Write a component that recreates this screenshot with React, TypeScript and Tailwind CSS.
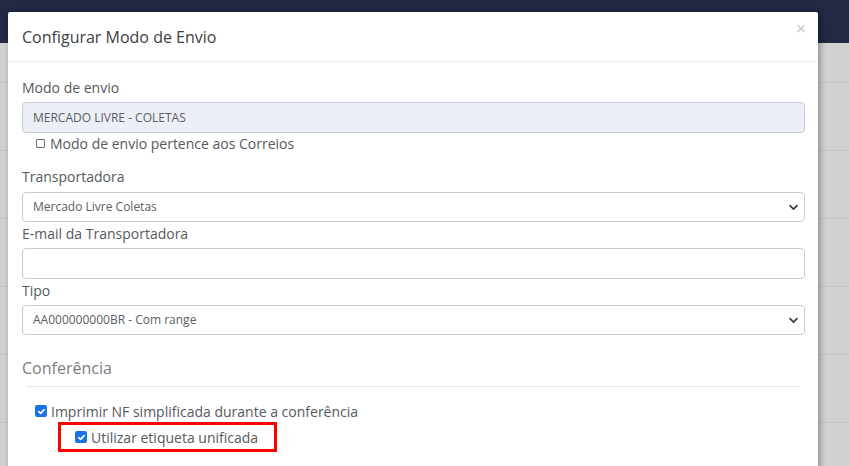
import React from "react";

const Chevron = () => (
  <svg width="11" height="11" viewBox="0 0 16 16" className="absolute right-[5px] top-1/2 -translate-y-1/2">
    <path d="M3 6l5 5 5-5" fill="none" stroke="#343a40" strokeWidth="2.4" strokeLinecap="round" strokeLinejoin="round" />
  </svg>
);

const Checked = () => (
  <span className="inline-flex w-[12px] h-[12px] rounded-[2px] bg-[#1a73e8] items-center justify-center shrink-0">
    <svg width="9" height="9" viewBox="0 0 12 12">
      <path d="M2.5 6.2l2.3 2.3 4.7-5" fill="none" stroke="white" strokeWidth="2.2" strokeLinecap="round" strokeLinejoin="round" />
    </svg>
  </span>
);

export default function App() {
  const rows = [0, 1, 2, 3, 4, 5];
  return (
    <div className="relative w-[849px] h-[466px] overflow-hidden bg-[#d0d1d1]" style={{ fontFamily: '"Open Sans", sans-serif' }}>
      <div className="h-[43px] bg-[#232845]" />
      <div className="flex flex-col">
        <div className="h-[40px] border-b border-[#c3c4c4]" />
        {rows.map((r) => (
          <div key={r} className="h-[68px] border-b border-[#c3c4c4]" />
        ))}
      </div>

      <div className="absolute left-[8px] top-[12px] w-[810px] h-[480px] bg-white rounded-t-[2px] shadow-[2px_0_6px_rgba(0,0,0,0.35)]">
        <div className="relative h-[50px] border-b border-[#e9ecef] flex items-center px-[14px]">
          <span className="text-[16px] text-[#3d4046] pt-[1px]">Configurar Modo de Envio</span>
          <span className="absolute right-[12px] top-[7px] text-[18px] text-[#c8c8c8] leading-none">×</span>
        </div>
        <div className="px-[14px] pt-[15px] text-[#495057]">
          <div className="text-[14px] leading-[21px] text-[#55595e]">Modo de envio</div>
          <div className="mt-[4px] h-[31px] w-[783px] rounded-[4px] border border-[#c5cad6] bg-[#eceff5] flex items-center pl-[10px] text-[12px] text-[#5a5e64]">
            MERCADO LIVRE - COLETAS
          </div>
          <div className="h-[20px] flex items-center pl-[14px] text-[14px] text-[#55595e]">
            <span className="w-[9px] h-[9px] border border-[#6a6e73] rounded-[1px] mr-[5px] shrink-0" />
            Modo de envio pertence aos Correios
          </div>

          <div className="mt-[13px] text-[14px] leading-[21px] text-[#55595e]">Transportadora</div>
          <div className="relative mt-[5px] h-[30px] w-[783px] rounded-[4px] border border-[#c5cad6] bg-white flex items-center pl-[10px] text-[12px] text-[#5a5e64]">
            Mercado Livre Coletas
            <Chevron />
          </div>
          <div className="mt-[1px] text-[14px] leading-[21px] text-[#55595e]">E-mail da Transportadora</div>
          <div className="mt-[4px] h-[31px] w-[783px] rounded-[4px] border border-[#c5cad6] bg-white" />
          <div className="mt-[1px] text-[14px] leading-[21px] text-[#55595e]">Tipo</div>
          <div className="relative mt-[4px] h-[30px] w-[783px] rounded-[4px] border border-[#c5cad6] bg-white flex items-center pl-[10px] text-[12px] text-[#5a5e64]">
            AA000000000BR - Com range
            <Chevron />
          </div>

          <div className="mt-[22px] text-[16px] leading-[22px] text-[#7a7e83]">Conferência</div>
          <div className="mt-[7px] ml-[4px] w-[774px] border-t border-[#e5e7ea]" />
          <div className="mt-[14px] ml-[13px] h-[20px] flex items-center gap-[4px] text-[14px] text-[#55595e]">
            <Checked />
            <span>Imprimir NF simplificada durante a conferência</span>
          </div>
          <div className="mt-[1px] ml-[36px] w-[219px] h-[30px] border-[3px] border-[#ff0000] flex items-center pl-[14px] gap-[4px] text-[14px] text-[#55595e]">
            <Checked />
            <span>Utilizar etiqueta unificada</span>
          </div>
        </div>
      </div>
    </div>
  );
}
